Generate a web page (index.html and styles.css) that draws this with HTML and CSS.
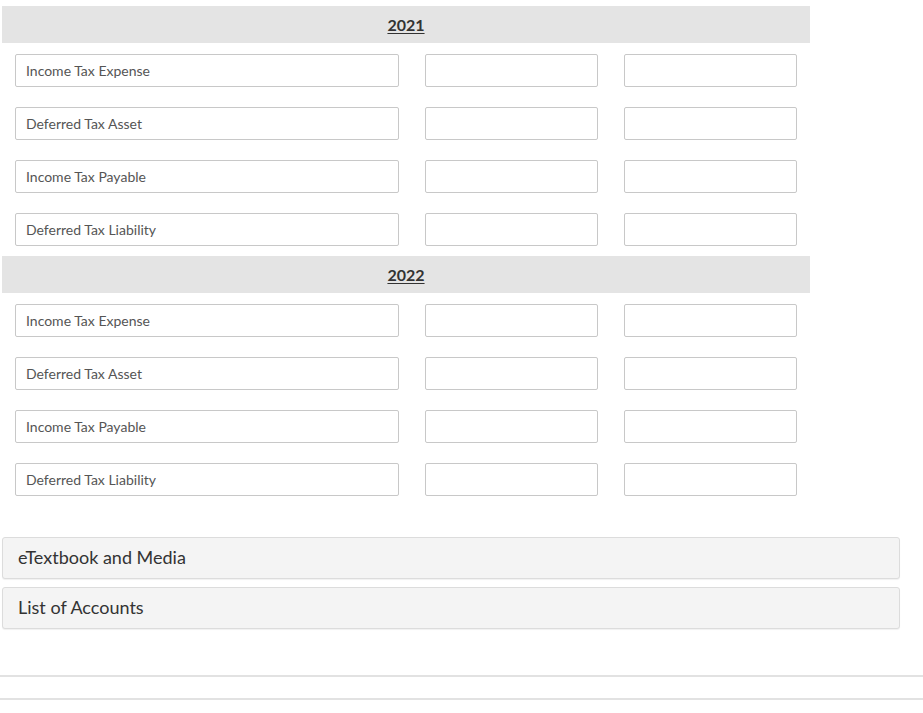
FILE: index.html
```html
<!DOCTYPE html>
<html>
<head>
<meta charset="utf-8">
<link rel="stylesheet" href="styles.css">
</head>
<body>
<div class="page">
  <div class="table">
    <div class="head"><span>2021</span></div>
    <div class="row"><div class="field acct">Income Tax Expense</div><div class="field num"></div><div class="field num"></div></div>
    <div class="row"><div class="field acct">Deferred Tax Asset</div><div class="field num"></div><div class="field num"></div></div>
    <div class="row"><div class="field acct">Income Tax Payable</div><div class="field num"></div><div class="field num"></div></div>
    <div class="row"><div class="field acct">Deferred Tax Liability</div><div class="field num"></div><div class="field num"></div></div>
    <div class="head"><span>2022</span></div>
    <div class="row"><div class="field acct">Income Tax Expense</div><div class="field num"></div><div class="field num"></div></div>
    <div class="row"><div class="field acct">Deferred Tax Asset</div><div class="field num"></div><div class="field num"></div></div>
    <div class="row"><div class="field acct">Income Tax Payable</div><div class="field num"></div><div class="field num"></div></div>
    <div class="row"><div class="field acct">Deferred Tax Liability</div><div class="field num"></div><div class="field num"></div></div>
  </div>
  <div class="panels">
    <div class="panel">eTextbook and Media</div>
    <div class="panel">List of Accounts</div>
  </div>
</div>
<div class="rule first"></div>
<div class="rule second"></div>
</body>
</html>
```
FILE: styles.css
```css
html, body {
  margin: 0;
  padding: 0;
  background: #fff;
  font-family: Lato, "Open Sans", sans-serif;
  color: #333;
}
.page {
  padding: 6px 0 0 2px;
}
.table {
  width: 808px;
  display: flex;
  flex-direction: column;
}
.head {
  height: 37px;
  background: #e4e4e4;
  display: flex;
  align-items: center;
  justify-content: center;
  font-size: 16px;
  font-weight: 700;
  color: #333;
  margin-bottom: 11px;
  padding-bottom: 1px;
  box-sizing: border-box;
}
.head span {
  text-decoration: underline;
  text-underline-offset: 2px;
}
.row {
  display: flex;
  gap: 26px;
  padding-left: 13px;
  margin-bottom: 20px;
}
.row:nth-child(5), .row:last-child {
  margin-bottom: 10px;
}
.field {
  box-sizing: border-box;
  height: 33px;
  border: 1px solid #c8c8c8;
  border-radius: 2px;
  background: #fff;
  font-size: 14px;
  color: #555;
  display: flex;
  align-items: center;
  padding-left: 10px;
}
.acct { width: 384px; }
.num { width: 173px; }
.panels {
  margin-top: 31px;
  width: 898px;
  display: flex;
  flex-direction: column;
  gap: 8px;
}
.panel {
  box-sizing: border-box;
  height: 42px;
  background: #f4f4f4;
  border: 1px solid #dcdcdc;
  border-radius: 3px;
  box-shadow: 0 1px 1px rgba(0,0,0,0.06);
  font-size: 18px;
  color: #333;
  display: flex;
  align-items: center;
  padding-left: 15px;
  padding-bottom: 2px;
}
.rule {
  height: 0;
  border-top: 2px solid #e2e2e2;
}
.rule.first { margin-top: 46px; }
.rule.second { margin-top: 21px; }
```
